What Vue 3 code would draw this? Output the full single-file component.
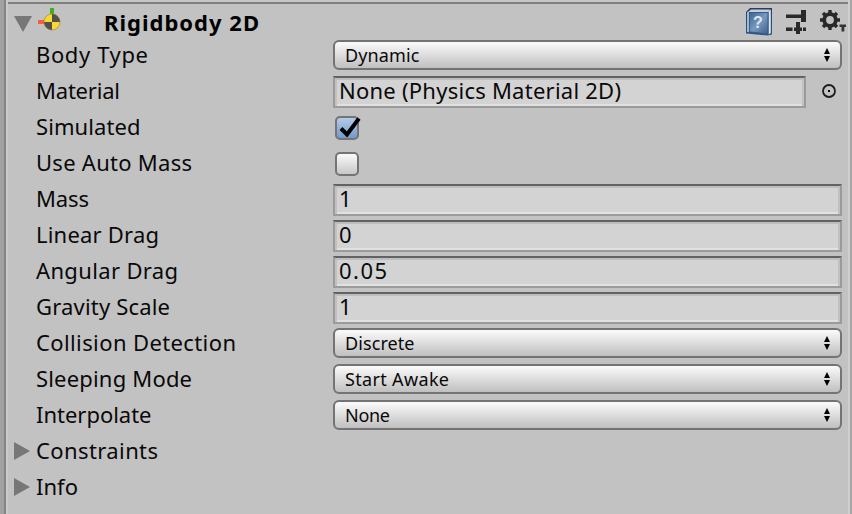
<script setup>
const rows = [
  { label: 'Body Type', w: 112, kind: 'select', value: 'Dynamic', vw: 74.5 },
  { label: 'Material', w: 84, kind: 'object', value: 'None (Physics Material 2D)', vw: 282 },
  { label: 'Simulated', w: 104.5, kind: 'check', checked: true },
  { label: 'Use Auto Mass', w: 156, kind: 'check', checked: false },
  { label: 'Mass', w: 53, kind: 'text', value: '1' },
  { label: 'Linear Drag', w: 123, kind: 'text', value: '0' },
  { label: 'Angular Drag', w: 142, kind: 'text', value: '0.05', vw: 48 },
  { label: 'Gravity Scale', w: 134, kind: 'text', value: '1' },
  { label: 'Collision Detection', w: 200, kind: 'select', value: 'Discrete', vw: 69.5 },
  { label: 'Sleeping Mode', w: 156, kind: 'select', value: 'Start Awake', vw: 104 },
  { label: 'Interpolate', w: 115.5, kind: 'select', value: 'None', vw: 45 },
  { label: 'Constraints', w: 122, kind: 'fold' },
  { label: 'Info', w: 42, kind: 'fold' },
]

// Tracks a label so that its advance width equals the given number of pixels.
const vFit = {
  mounted(el, { value }) {
    const n = el.textContent.length - 1
    if (!value || n < 1) return
    const natural = el.getBoundingClientRect().width
    el.style.letterSpacing = `${(value - natural) / n}px`
  },
}
</script>

<template>
  <div class="inspector">
    <div class="edge-left"></div>
    <main class="panel">
      <header class="header">
        <svg class="fold-open" width="18" height="16" viewBox="0 0 18 16"><path d="M0 0H18L9 16Z" fill="#777" /></svg>
        <svg class="body-icon" width="24" height="24" viewBox="0 0 24 24">
          <rect x="12" y="0" width="4" height="7" fill="#43ad20" />
          <rect x="0" y="12" width="7" height="4" fill="#ff5a40" />
          <circle cx="14" cy="14" r="8.2" fill="#fbd72f" />
          <path d="M14 14V5.800A8.200 8.200 0 0 1 22.200 14ZM14 14V22.200A8.200 8.200 0 0 1 5.800 14Z" fill="#505050" />
          <circle cx="14" cy="14" r="8" fill="none" stroke="#8c7d3c" stroke-width=".6" />
        </svg>
        <h1 class="title"><span v-fit="155">Rigidbody 2D</span></h1>
        <svg class="tools" width="102" height="32" viewBox="744 6 102 32">
          <defs>
            <linearGradient id="cover" x1="0" y1="0" x2="1" y2="1">
              <stop offset="0" stop-color="#3f628c" /><stop offset=".5" stop-color="#7899bf" /><stop offset="1" stop-color="#3c608a" />
            </linearGradient>
            <linearGradient id="pages" x1="0" y1="0" x2="0" y2="1">
              <stop offset="0" stop-color="#253f63" /><stop offset="1" stop-color="#30588b" />
            </linearGradient>
          </defs>
          <path d="M750 8H772V34.500L768 35.500L746 33.500V12Z" fill="url(#pages)" />
          <path d="M751 9.500H770L768 12H748Z" fill="#c6ced7" />
          <path d="M768.500 11L770.800 9.500V33L768.500 34.500Z" fill="#e1e5ec" />
          <path d="M747 12L749 11.500V32L747 32Z" fill="#9eb8d5" />
          <path d="M749.500 12.500H768V34L749.500 31.800Z" fill="url(#cover)" stroke="#365c8a" stroke-width="1" />
          <text x="758" y="27.500" class="help-mark">?</text>
          <path fill="#292929" d="M786 14.500H801V10H806V22H801V18H786ZM786 27.500H792.500V31H786ZM794 27.500H796V22H800V27.500H802V31H800V34H796V31H794ZM803 27.500H806V31H803Z" />
          <g fill="none" stroke="#292929">
            <circle cx="830" cy="20" r="5.800" stroke-width="3.800" />
            <path d="M830 10V14M830 26V30M820 20H824M836 20H840M823 13L826 16M834 24L837 27M837 13L834 16M826 24L823 27" stroke-width="3.400" />
          </g>
          <path d="M839.500 24.500H846V27H844.300V31.500H841.500V27H839.500Z" fill="#333" />
        </svg>
      </header>

      <div v-for="row in rows" :key="row.label" class="row">
        <div class="gutter">
          <svg v-if="row.kind === 'fold'" width="16" height="18" viewBox="0 0 16 18"><path d="M0 0L16 9L0 18Z" fill="#777" /></svg>
        </div>
        <div class="label"><span v-fit="row.w">{{ row.label }}</span></div>

        <div v-if="row.kind === 'select'" class="select">
          <span v-fit="row.vw">{{ row.value }}</span>
          <svg width="6" height="14" viewBox="0 0 6 14"><path d="M3 0L6 6H0ZM0 8H6L3 14Z" /></svg>
        </div>

        <template v-else-if="row.kind === 'text' || row.kind === 'object'">
          <div class="field"><span v-fit="row.vw">{{ row.value }}</span></div>
          <div v-if="row.kind === 'object'" class="picker">
            <svg width="14" height="14" viewBox="0 0 14 14">
              <circle cx="7" cy="7" r="6" fill="none" stroke="#1c1c1c" stroke-width="1.800" />
              <rect x="6" y="6" width="2" height="2" />
            </svg>
          </div>
        </template>

        <div v-else-if="row.kind === 'check'" class="check" :class="{ on: row.checked }">
          <svg v-if="row.checked" class="tick" width="22" height="21" viewBox="0 0 22 21">
            <path d="M2 11.500L8 17.500L20 1.500" fill="none" stroke="#000" stroke-width="4" />
          </svg>
        </div>
      </div>
    </main>
    <div class="edge-right"></div>
  </div>
</template>

<style>
body { background: #c2c2c2; overflow: hidden; }
</style>

<style scoped>
* { box-sizing: border-box; }
.inspector {
  display: flex;
  width: 852px;
  height: 514px;
  background: #c2c2c2;
  color: #090909;
  font-family: "Noto Sans", "Open Sans", sans-serif;
  font-size: 22px;
}
.edge-left {
  flex: 0 0 8px;
  background: linear-gradient(to right, #a2a2a2 4px, #858585 4px 6px, #cbcbcb 6px);
}
.edge-right {
  flex: 0 0 4px;
  background: linear-gradient(to right, #cfcfcf 2px, #a5a5a5 2px);
}
.panel {
  flex: 1;
  min-width: 0;
  background: linear-gradient(#c6c6c6 2px, #7e7e7e 2px 4px, #c2c2c2 4px);
}
.header {
  display: flex;
  height: 37px;
  padding: 6px 2px 0 6px;
}
.fold-open { flex: none; margin-top: 10px; }
.body-icon { flex: none; margin: 2px 0 0 6px; }
.title {
  flex: 1;
  margin: 0;
  padding-left: 42px;
  font-size: 22px;
  line-height: 33px;
  font-weight: 700;
  color: #000;
}
.tools { flex: none; }
.help-mark {
  font: 700 16px "Liberation Sans", sans-serif;
  fill: #dce8f5;
  text-anchor: middle;
}
.row {
  display: flex;
  height: 36px;
  padding-right: 6px;
}
.gutter { flex: 0 0 26px; padding-left: 6px; }
.gutter svg { display: block; margin-top: 9px; }
.label {
  flex: 0 0 299px;
  padding-left: 2px;
  line-height: 34px;
  white-space: nowrap;
}
.select {
  flex: 1;
  display: flex;
  align-items: center;
  justify-content: space-between;
  height: 30px;
  margin-top: 3px;
  padding: 0 10px 0 10px;
  border: 2px solid #747474;
  border-radius: 6px;
  background: linear-gradient(#fbfbfb, #e0e0e0 45%, #c1bfc0);
  font-size: 18px;
  line-height: 26px;
  white-space: nowrap;
}
.field {
  flex: 1;
  height: 32px;
  margin-top: 3px;
  padding-left: 4px;
  border: 2px solid #9b9b9b;
  border-top-color: #626262;
  background: #d3d3d3;
  box-shadow: inset 0 2px #bebebe, inset 2px 0 #c1c1c1, inset -2px 0 #c1c1c1, inset 0 -2px #e1e1e1;
  line-height: 25px;
  white-space: nowrap;
}
.picker { flex: 0 0 36px; padding: 11px 0 0 16px; }
.picker svg { display: block; }
.check {
  position: relative;
  width: 24px;
  height: 24px;
  margin: 7px 0 0 2px;
  border: 2px solid #747474;
  border-radius: 5px;
  background: linear-gradient(#fafafa, #c7c7c7);
}
.check.on { background: linear-gradient(#b5cbe8, #7398cb); }
.tick { position: absolute; left: 2px; top: -1px; }
</style>
